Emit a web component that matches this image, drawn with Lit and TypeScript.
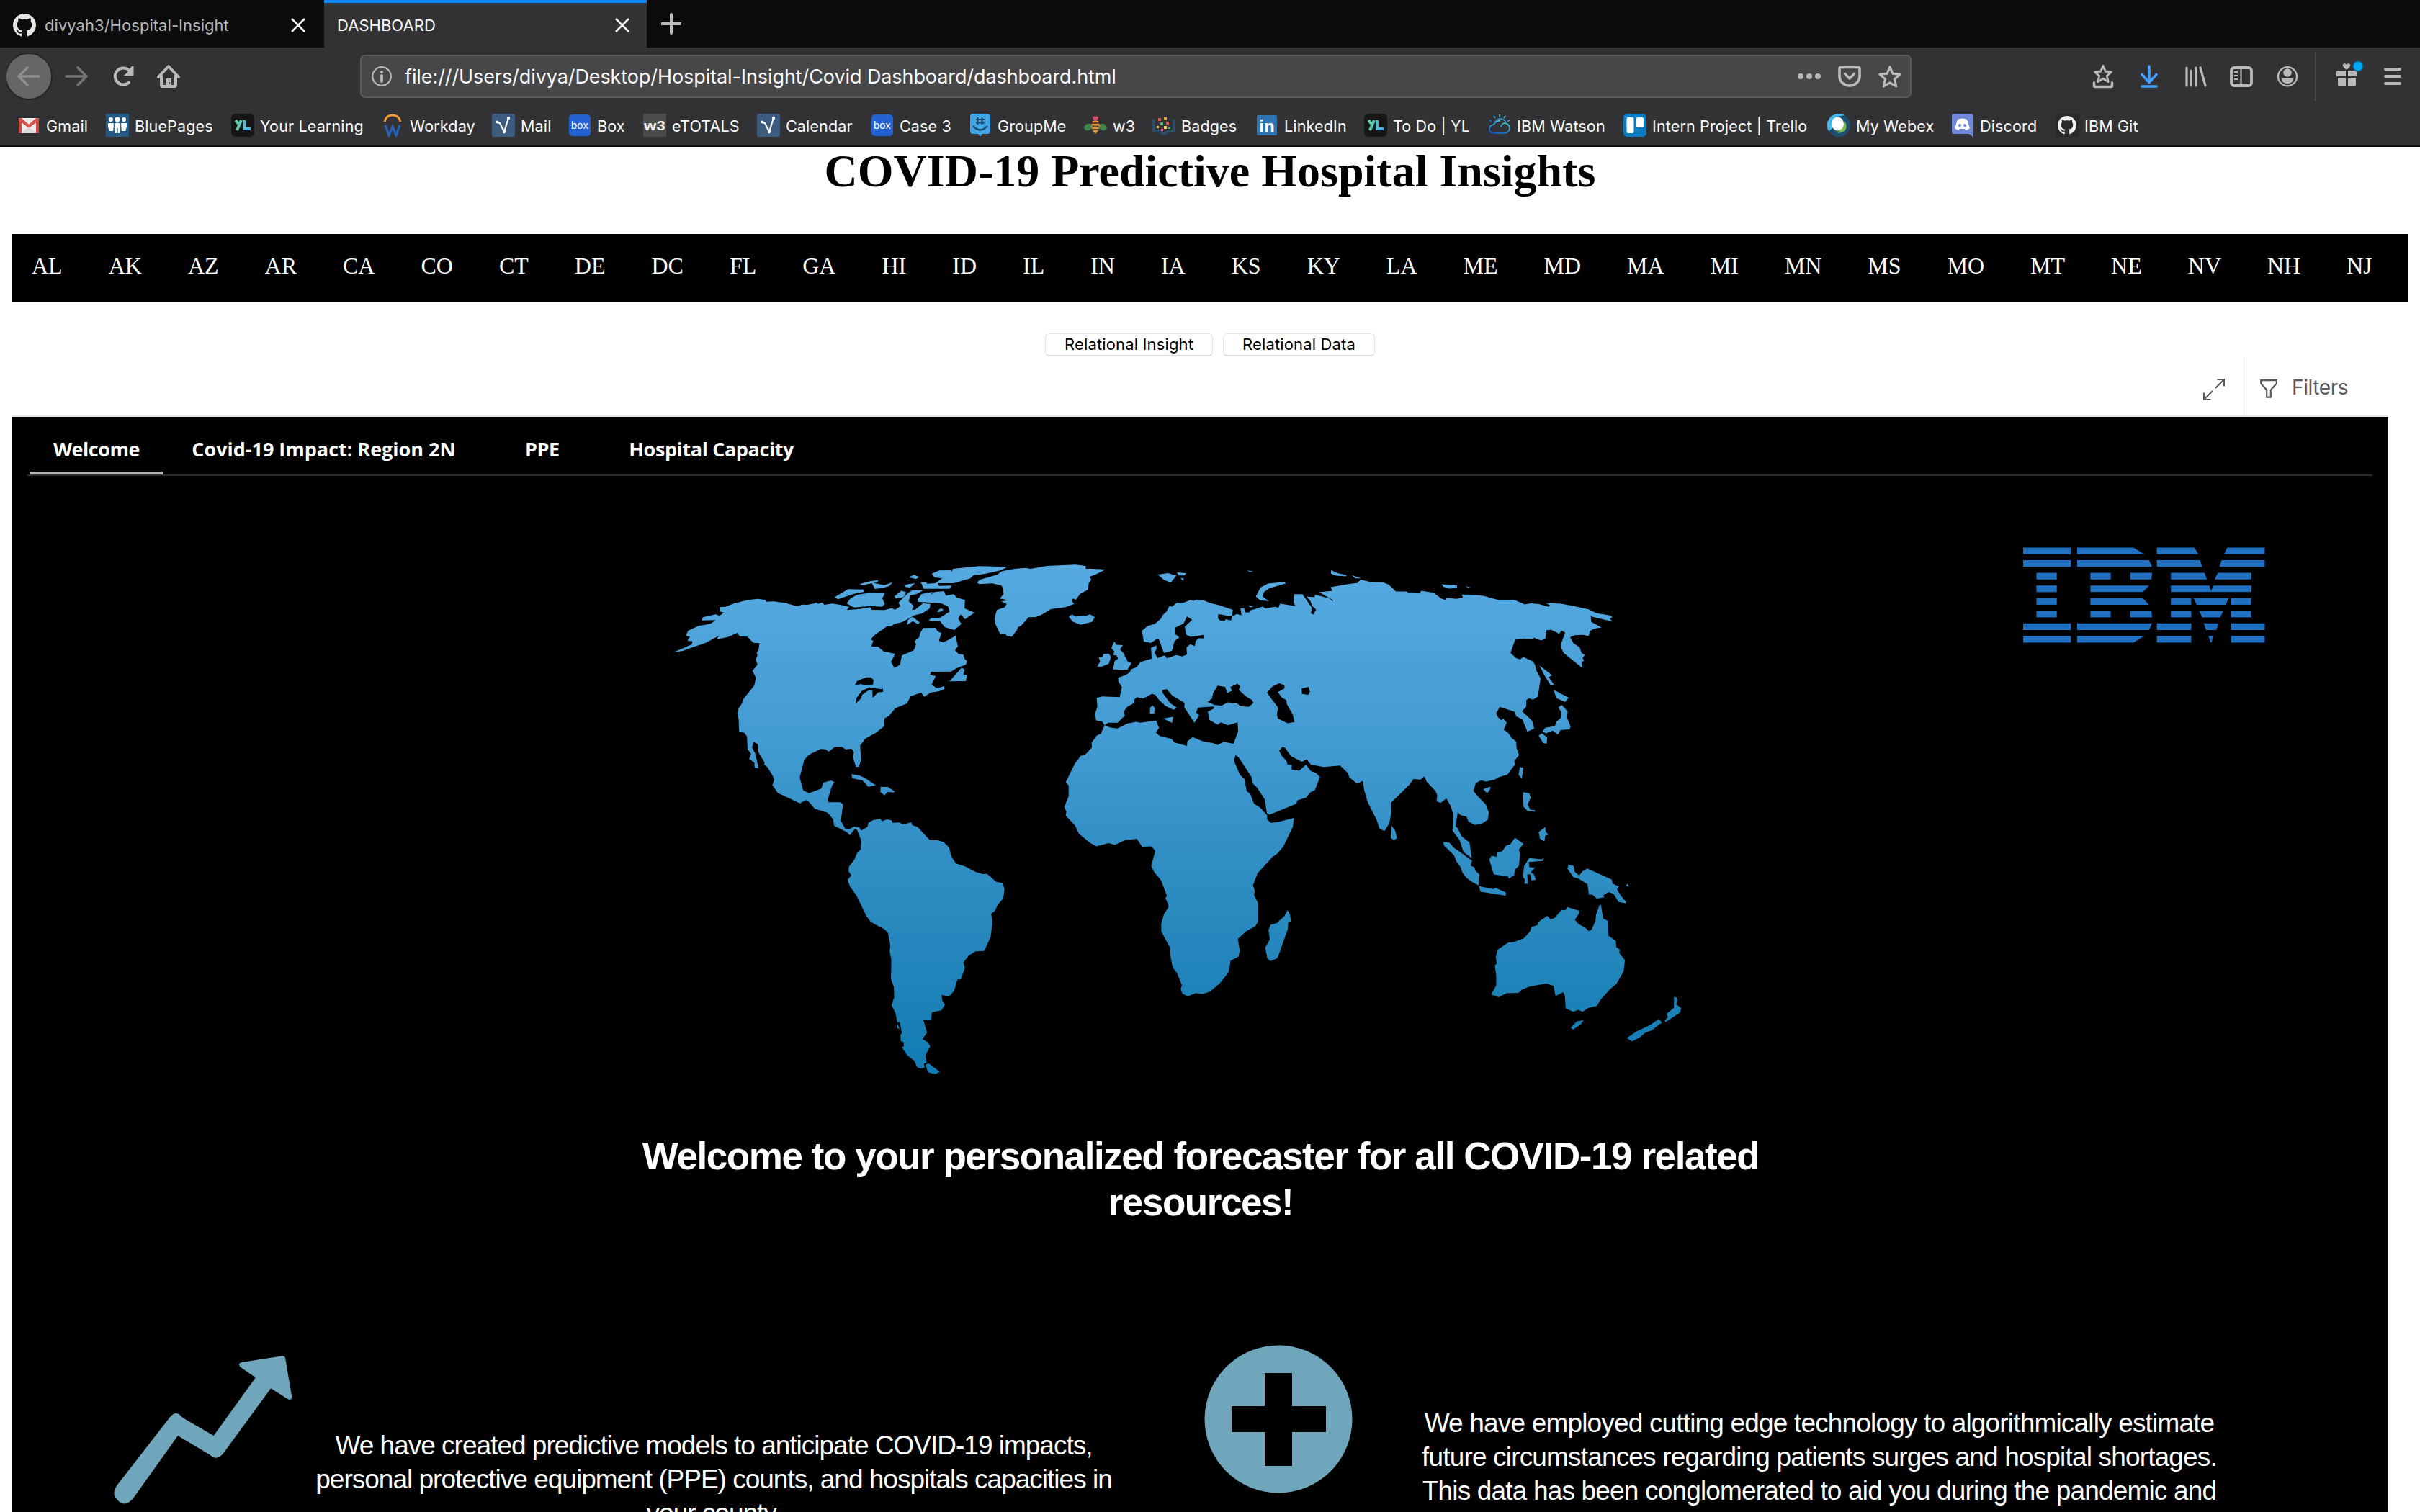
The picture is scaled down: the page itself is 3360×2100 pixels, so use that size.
import { LitElement, html, svg, css } from "lit";
import { customElement } from "lit/decorators.js";

const OCTOCAT =
  "M8 0C3.58 0 0 3.58 0 8c0 3.54 2.29 6.53 5.47 7.59.4.07.55-.17.55-.38 0-.19-.01-.82-.01-1.49-2.01.37-2.53-.49-2.69-.94-.09-.23-.48-.94-.82-1.13-.28-.15-.68-.52-.01-.53.63-.01 1.08.58 1.23.82.72 1.21 1.87.87 2.33.66.07-.52.28-.87.51-1.07-1.78-.2-3.64-.89-3.64-3.95 0-.87.31-1.59.82-2.15-.08-.2-.36-1.02.08-2.12 0 0 .67-.21 2.2.82.64-.18 1.32-.27 2-.27s1.36.09 2 .27c1.53-1.04 2.2-.82 2.2-.82.44 1.1.16 1.92.08 2.12.51.56.82 1.27.82 2.15 0 3.07-1.87 3.75-3.65 3.95.29.25.54.73.54 1.48 0 1.07-.01 1.93-.01 2.2 0 .21.15.46.55.38A8.01 8.01 0 0 0 16 8c0-4.42-3.58-8-8-8z";

const sans = "Liberation Sans, Arial, sans-serif";

/* Bookmark icons, each on a 32 x 32 canvas. */
const favicons: Record<string, unknown> = {
  gmail: svg`<rect x="2" y="6" width="28" height="21" rx="2" fill="#eeecec"/><path d="M2 27V8l4 3v16zM30 27V8l-4 3v16z" fill="#c94a3d"/><path d="M2 9Q2 5 6 6l10 9 10-9q4-1 4 3L16 20z" fill="#d8524a"/><path d="M6 27l10-9 10 9z" fill="#d9d8d8"/>`,
  blue: svg`<rect width="32" height="32" fill="#235a85"/><g fill="#fff"><circle cx="7" cy="8" r="3"/><circle cx="25" cy="8" r="3"/><circle cx="16" cy="8" r="3.4"/><path d="M3 13h8v5l-1 6H5l-2-6zM21 13h8v5l-2 6h-5l-1-6zM11 14q5-3 10 0v7l-2 6h-6l-2-6z"/></g><path d="M11.300 13v12M20.700 13v12M16 20v7" stroke="#235a85" stroke-width="1.200"/>`,
  yl: svg`<defs><linearGradient id="yl" x1="0" x2="1"><stop offset="0" stop-color="#5fd39a"/><stop offset="1" stop-color="#4aa9f5"/></linearGradient></defs><rect width="32" height="32" rx="6" fill="#161616"/><path d="M6 9l6 7M14 9L8 23M18 9v12h9" stroke="url(#yl)" stroke-width="4" fill="none"/>`,
  workday: svg`<path d="M5 11Q7 2 16 2t11 9" fill="none" stroke="#f09a37" stroke-width="3"/><path d="M6 16l5 14 5-12 5 12 5-14" fill="none" stroke="#2760b8" stroke-width="3.400"/>`,
  verse: svg`<rect width="32" height="32" rx="2" fill="#3b5b80"/><path d="M7 12l4 1 6 12 6-19" fill="none" stroke="#fff" stroke-width="2.200"/><circle cx="7" cy="11.500" r="2" fill="#fff"/><circle cx="23" cy="6" r="2.200" fill="#fff"/><circle cx="17" cy="25" r="2.200" fill="#fff"/>`,
  box: svg`<rect x="1" y="1" width="30" height="30" rx="5" fill="#2362d0"/><text x="16" y="21" text-anchor="middle" font-family=${sans} font-size="15" textLength="24" lengthAdjust="spacingAndGlyphs" fill="#fff">box</text>`,
  etotals: svg`<rect width="32" height="32" fill="#4c4c4c"/><text x="16" y="23" text-anchor="middle" font-family=${sans} font-weight="700" font-size="19" textLength="30" lengthAdjust="spacingAndGlyphs" fill="#eee">w3</text>`,
  groupme: svg`<path d="M6 0h20q4 0 4 4v20q0 4-4 4h-7l-3 4-3-4H6q-4 0-4-4V4q0-4 4-4z" fill="#3fa5e8"/><path d="M12.500 5v10M18.500 5v10M10 8h12M10 12.500h12" stroke="#1c4566" stroke-width="2"/><path d="M6 17q10 11 20 0" fill="none" stroke="#1c4566" stroke-width="2.400"/>`,
  bee: svg`<path d="M13 4l2 4M19 4l-2 4" stroke="#d94f68" stroke-width="3"/><circle cx="16" cy="7" r="3" fill="#d94f68"/><ellipse cx="6" cy="18.500" rx="6" ry="4.500" fill="#3f8749" transform="rotate(-20 6 18.500)"/><ellipse cx="26" cy="18.500" rx="6" ry="4.500" fill="#3f8749" transform="rotate(20 26 18.500)"/><path d="M12 10h8l2 7-3 8-3 3-3-3-3-8z" fill="#e6963a"/><path d="M11 13h10M11 17.500h10M11 22h10" stroke="#5a4326" stroke-width="1.800"/>`,
  badges: svg`<path d="M2 8v16l9 1 5 3 5-3 9-1V8" fill="none" stroke="#28506f" stroke-width="3.500"/><g><rect x="8" y="6" width="4" height="4" fill="#e0554b"/><rect x="16" y="5" width="4" height="4" fill="#f0a83f"/><rect x="11" y="12" width="4" height="4" fill="#49ae73"/><rect x="19" y="11" width="4" height="4" fill="#e0554b"/><rect x="6" y="17" width="3" height="3" fill="#ddc846"/><rect x="16" y="17" width="4" height="4" fill="#f0d04f"/><rect x="12" y="21" width="3" height="3" fill="#d9609a"/><rect x="22" y="18" width="3" height="3" fill="#66b46a"/></g>`,
  linkedin: svg`<rect x="2" y="2" width="28" height="28" rx="2" fill="#2f75b0"/><text x="16" y="25.500" text-anchor="middle" font-family=${sans} font-weight="700" font-size="24" fill="#fff">in</text>`,
  watson: svg`<defs><linearGradient id="wt" x1="0" y1="1" x2=".6" y2="0"><stop offset="0" stop-color="#1552d8"/><stop offset="1" stop-color="#3fd0d8"/></linearGradient></defs><g fill="none" stroke="url(#wt)" stroke-width="1.700"><path d="M7 27q-5-1-5-6t6-6q3-6 9-5M8 27h16q6-2 6-7t-6-7q-5 0-6 5"/><path d="M9 13q2-6 8-6 5 0 8 5M16 1l.01 4M8 3l2 3M24 3l-2 3M2 9l3 1.500M30 9l-3 1.500"/></g>`,
  trello: svg`<rect width="32" height="32" rx="5" fill="#0a7bc2"/><rect x="4.500" y="5" width="10" height="22" rx="2" fill="#fff"/><rect x="18" y="5" width="10" height="14" rx="2" fill="#fff"/>`,
  webex: svg`<circle cx="16" cy="16" r="16" fill="#1d4f72"/><path d="M16 0a16 16 0 0 0-14 24Q10 20 14 4l10-2A16 16 0 0 0 16 0z" fill="#45b8ea"/><path d="M10 24q10 4 14-14 6 10-2 15-6 4-12-1z" fill="#7bbf53"/><ellipse cx="14.500" cy="14" rx="8.500" ry="9.500" fill="#fff"/>`,
  discord: svg`<path d="M4 0h24q2 0 2 2v30l-5-4H4q-3 0-3-3V3q0-3 3-3z" fill="#7289da"/><path d="M9 8q7-3 13 0l4 12q-3 3-6 3l-1-2h-7l-1 2q-3 0-6-3z" fill="#fff"/><circle cx="12" cy="16" r="2" fill="#7289da"/><circle cx="19" cy="16" r="2" fill="#7289da"/>`,
  github: svg`<rect width="32" height="32" rx="3" fill="#2a2a2c"/><g transform="translate(3 3) scale(1.620)"><path d=${OCTOCAT} fill="#f0f0f0"/></g>`,
};

const bookmarks: [string, string][] = [
  ["gmail", "Gmail"],
  ["blue", "BluePages"],
  ["yl", "Your Learning"],
  ["workday", "Workday"],
  ["verse", "Mail"],
  ["box", "Box"],
  ["etotals", "eTOTALS"],
  ["verse", "Calendar"],
  ["box", "Case 3"],
  ["groupme", "GroupMe"],
  ["bee", "w3"],
  ["badges", "Badges"],
  ["linkedin", "LinkedIn"],
  ["yl", "To Do | YL"],
  ["watson", "IBM Watson"],
  ["trello", "Intern Project | Trello"],
  ["webex", "My Webex"],
  ["discord", "Discord"],
  ["github", "IBM Git"],
];

const states =
  "AL AK AZ AR CA CO CT DE DC FL GA HI ID IL IN IA KS KY LA ME MD MA MI MN MS MO MT NE NV NH NJ".split(" ");

/* Land outlines, one set per part of the world; each set has its own scale. */
const NORTH_AMERICA =
  "M78 438L110 420L135 405L138 392L122 390L130 372L117 370L124 348L158 327L172 325L195 318L210 304L166 305L170 292L210 280L222 286L235 272L222 268L222 250L240 248L270 233L310 220L340 215L365 220L368 227L390 226L425 232L462 246L480 239L495 240L518 234L522 230L528 236L540 230L548 240L572 235L600 241L625 249L618 262L660 257L690 250L695 261L735 262L757 254L768 260L785 245L778 232L790 215L805 195L820 180L855 180L835 195L815 200L810 225L826 245L820 262L830 260L855 233L878 237L875 255L852 276L830 283L790 312L765 320L755 329L742 330L705 365L692 383L700 391L694 413L715 415L732 434L768 444L755 478L766 503L783 490L789 451L826 430L833 405L828 392L843 375L845 360L855 337L893 336L900 350L912 358L904 390L917 397L940 382L956 368L963 413L954 430L965 444L980 448L984 466L992 475L988 489L958 505L942 518L880 519L877 530L894 538L881 572L898 588L920 579L922 590L905 600L878 606L858 623L849 606L816 621L805 651L768 671L749 703L735 713L732 748L708 773L675 798L659 827L662 887L655 915L646 915L636 873L640 855L633 840L614 842L600 831L582 831L561 852L552 842L536 841L498 866L485 887L471 960L482 1013L500 1025L538 1006L545 981L568 972L580 979L572 993L558 1052L561 1063L598 1063L606 1072L599 1140L613 1173L625 1175L640 1164L655 1168L662 1180L662 1220L650 1178L643 1174L627 1200L618 1187L578 1160L575 1133L558 1106L518 1090L498 1059L490 1054L472 1067L403 1024L386 991L392 970L387 952L370 915L361 907L362 897L343 855L341 822L328 810L323 835L333 860L343 921L331 919L330 898L314 882L320 860L309 842L307 788L299 773L283 768L281 715L277 695L281 671L290 655L296 633L330 576L335 543L324 515L340 489L334 468L340 450L337 440L343 430L346 400L327 398L308 373L285 371L277 357L248 374L212 384L221 368L178 399L125 423L108 432Z" +
  "M937 559L975 502L984 510L980 530L992 532L988 558Z" +
  "M632 946L655 950L672 960L708 992L684 998L667 972L635 963Z" +
  "M723 998L745 999L766 1017L764 1022L744 1020L735 1034L722 1020Z" +
  "M617 234L630 212L650 198L675 193L705 190L736 193L728 213L736 237L727 248L690 245L640 251Z" +
  "M580 208L622 175L668 176L672 186L640 194L590 217Z" +
  "M657 154L690 142L716 137L712 146L665 158Z" +
  "M695 148L735 158L760 146L750 162L728 170L705 174Z" +
  "M766 205L788 181L803 188L795 208L770 214Z" +
  "M796 157L830 150L815 168L800 166Z" +
  "M810 125L826 115L843 124L833 133Z" +
  "M848 147L865 146L867 152L900 149L905 161L943 160L937 173L857 173Z" +
  "M893 150L945 100L948 90L985 85L1030 79L1118 82L1095 97L1045 112L1012 116L1002 130L950 150Z" +
  "M882 110L905 97L940 96L944 106L930 118L912 130L890 125Z" +
  "M837 220L850 195L885 186L868 215L875 200L892 186L920 184L926 202L950 196L960 210L985 220L984 255L1015 273L985 300L972 280L964 297L974 320L952 345L922 333L907 307L873 306L880 294L907 295L938 268L932 247L910 233L870 230L840 228Z" +
  "M898 268L908 256L918 258L914 267L902 270Z" +
  "M804 325L808 302L822 290L844 313L840 322L823 308Z";

const GREENLAND =
  "M1022 147L1032 135L1085 115L1100 100L1140 90L1172 86L1190 90L1215 84L1240 78L1290 75L1330 73L1360 78L1361 90L1375 89L1422 93L1390 115L1372 123L1378 135L1370 150L1368 176L1343 195L1330 220L1322 214L1316 222L1325 236L1298 250L1252 258L1222 283L1205 291L1183 292L1160 327L1150 333L1147 345L1131 373L1115 370L1111 359L1095 363L1080 320L1077 297L1084 262L1109 250L1115 237L1098 225L1121 221L1094 214L1105 195L1104 172L1098 159L1070 151L1030 154Z" +
  "M1308 290L1318 280L1328 289L1362 286L1374 280L1389 292L1380 311L1345 323L1320 310Z";

const GREAT_LAKES =
  "M642 575L650 557L678 542L692 542L701 553L699 572L672 575L662 570Z" +
  "M645 652L648 628L665 598L688 584L726 592L729 587L731 602L715 605L698 628L697 595L685 596L665 615L662 630Z";

const SOUTH_AMERICA =
  "M662 281L682 265L685 248L700 237L722 232L727 242L742 234L757 238L760 248L780 247L793 255L818 246L821 258L838 266L876 321L900 321L918 328L936 352L942 387L957 418L985 430L1018 453L1040 462L1054 461L1083 495L1101 499L1108 525L1104 563L1087 590L1078 615L1067 627L1070 670L1065 724L1045 782L1018 784L997 802L980 830L985 853L972 901L962 901L951 949L935 973L912 965L915 992L923 1005L912 1030L882 1038L880 1069L867 1071L855 1067L867 1122L853 1150L870 1163L877 1180L862 1217L866 1248L857 1252L860 1268L847 1273L836 1266L827 1240L806 1217L788 1183L795 1180L794 1162L785 1158L785 1130L789 1125L782 1078L775 1080L769 1042L757 1008L765 975L764 932L755 900L756 820L751 782L753 760L746 708L735 692L693 662L679 638L648 552L627 512L620 485L632 468L623 450L624 432L642 400L649 376L662 358L660 348L662 315L650 278L655 265Z" +
  "M862 1256L872 1250L907 1286L892 1295L870 1288Z" +
  "M775 1085L782 1107L775 1105Z";

const EUROPE_AFRICA =
  "M248 513L270 508L344 510L353 476L338 457L338 444L370 434L385 426L392 415L415 408L430 391L478 379L474 343L497 334L497 348L488 358L502 377L530 368L541 378L580 367L605 372L624 365L622 342L637 330L657 336L660 320L672 310L696 310L695 298L640 305L620 297L615 270L646 247L624 236L610 260L575 274L575 296L592 307L572 320L562 352L528 360L508 315L500 311L474 326L444 321L437 284L460 268L490 261L515 244L524 230L537 221L552 199L562 203L582 188L607 190L640 179L650 183L665 178L695 181L720 190L760 198L815 213L813 232L800 234L755 228L753 242L763 250L782 251L785 245L808 249L812 236L832 227L851 232L847 208L862 207L866 222L885 222L888 215L940 202L950 208L992 203L1005 206L1012 192L1075 200L1068 185L1070 160L1105 160L1122 180L1145 207L1140 225L1150 229L1162 212L1146 200L1138 183L1122 168L1155 170L1158 162L1200 170L1215 172L1230 184L1232 180L1200 165L1175 153L1230 148L1222 136L1300 125L1333 122L1348 110L1380 117L1380 780L1357 795L1333 805L1300 783L1295 769L1262 743L1195 748L1140 740L1123 722L1103 730L1058 712L1033 683L1022 679L1008 692L1020 712L1036 724L1043 739L1060 740L1060 757L1092 761L1120 740L1140 762L1162 768L1178 782L1157 826L1138 834L1120 852L1083 862L1080 873L968 910L957 905L948 858L918 820L896 802L893 782L840 716L825 706L830 695L820 727L845 775L863 788L873 830L888 840L903 873L930 887L958 912L958 926L973 938L1005 935L1070 921L1065 952L1025 1019L1000 1043L980 1054L918 1110L899 1150L906 1168L904 1185L920 1210L920 1275L908 1290L870 1307L836 1333L844 1373L839 1393L806 1407L797 1447L762 1483L720 1512L690 1520L660 1518L627 1528L605 1519L598 1503L603 1490L582 1448L565 1431L556 1395L553 1362L517 1307L517 1280L528 1249L547 1225L546 1215L535 1195L540 1185L516 1133L488 1106L475 1085L492 1034L477 1018L437 1019L416 993L368 996L324 1013L297 1007L246 1018L220 1006L174 975L158 947L119 913L122 900L113 884L131 848L131 811L119 800L158 735L182 710L200 706L228 682L227 665L248 641L266 634L281 605L305 614L335 617L375 600L412 594L430 597L495 590L508 615L494 630L510 642L562 653L570 664L624 676L626 660L648 646L697 663L730 666L752 673L777 662L818 669L837 627L835 596L795 606L765 596L752 604L718 588L711 560L738 548L735 542L670 546L662 562L675 572L655 597L613 545L614 530L562 504L540 483L521 486L522 495L553 530L583 547L568 553L535 540L508 520L492 502L478 499L440 515L416 510L405 518L405 530L375 543L360 560L365 573L335 597L297 597L281 605L270 592L247 590L239 572L251 542Z" +
  "M470 546L482 539L490 547L487 567L470 566Z" +
  "M524 583L567 577L562 598Z" +
  "M321 321L330 332L357 333L345 348L360 361L378 390L393 394L376 417L316 416L323 387L337 380L331 369L316 366L322 355L309 343Z" +
  "M257 374L272 374L276 363L298 362L308 373L298 397L268 407L251 406L262 389Z" +
  "M502 93L545 88L580 97L557 120L530 112Z" +
  "M582 86L620 88L615 96L590 96Z" +
  "M597 105L610 106L609 115Z" +
  "M911 168L930 137L962 124L1032 118L1035 124L965 140L944 153L940 168L965 184L928 180Z" +
  "M880 197L903 200L888 205Z" +
  "M876 79L902 83L885 85Z" +
  "M1225 78L1250 88L1290 95L1285 99L1245 97L1224 90Z" +
  "M1310 95L1350 106L1325 106Z" +
  "M1043 1235L1053 1249L1057 1273L1046 1276L1044 1300L1005 1390L1000 1399L972 1408L959 1400L950 1362L969 1335L964 1302L972 1285L998 1279L1030 1255Z";

const INLAND_SEAS =
  "M709 527L728 515L733 497L752 471L783 475L792 496L812 488L805 476L835 464L846 474L840 486L870 508L895 520L901 530L882 543L845 541L835 532L795 528L768 539L738 537L720 529Z" +
  "M957 495L980 474L1008 463L1030 469L1030 481L1002 493L1020 512L1038 520L1040 534L1065 570L1072 595L1043 599L1003 583L999 570L1003 545Z" +
  "M1102 481L1130 475L1136 491L1130 502L1103 499Z";

const ASIA_PACIFIC =
  "M241 101L270 105L318 107L335 113L361 134L400 134L405 137L449 140L452 132L498 138L525 155L542 160L545 153L580 156L604 153L600 143L640 144L678 147L730 159L790 159L828 173L850 170L880 172L915 180L920 176L905 169L960 171L1000 177L1060 188L1088 199L1140 207L1146 212L1137 216L1147 225L1110 218L1068 209L1070 226L1107 243L1082 246L1065 253L1060 269L1040 265L1010 266L993 272L1005 290L1028 303L1034 319L1046 326L1038 335L1044 343L1036 347L1038 366L970 320L960 303L961 290L975 258L962 252L953 262L925 250L907 251L903 277L887 282L862 274L858 277L823 276L793 280L777 320L798 336L812 339L823 332L855 344L865 354L870 372L886 397L876 452L858 461L844 457L834 463L834 482L819 496L855 525L863 548L838 558L820 521L797 511L793 498L738 483L725 502L730 513L744 524L750 518L763 531L752 552L767 560L781 577L797 588L799 608L808 629L790 647L793 657L765 688L735 695L720 703L688 709L670 705L651 713L642 737L660 755L687 778L698 802L695 824L675 835L648 840L624 830L617 815L595 810L585 802L578 845L585 850L600 875L628 893L636 940L606 922L592 886L566 857L570 830L567 802L558 780L544 760L523 773L508 768L511 752L506 739L473 710L464 693L451 703L425 701L410 718L362 758L342 773L344 805L337 835L320 858L302 852L291 825L258 770L246 735L241 707Z" +
  "M345 843L358 857L365 880L353 887L342 878Z" +
  "M678 732L704 724L703 732L692 745Z" +
  "M811 665L823 667L818 700L806 688Z" +
  "M822 741L845 744L850 758L839 778L848 794L867 796L865 800L838 797L824 785Z" +
  "M879 862L903 846L905 860L913 869L902 874L900 890L884 882Z" +
  "M700 945L708 933L726 937L728 924L748 919L760 903L777 898L793 879L824 897L807 914L812 927L807 964L793 975L790 992L770 1003L768 996L716 990Z" +
  "M533 891L556 894L570 908L637 948L632 963L645 968L651 980L664 990L661 1023L637 1012L617 1000L603 985L596 968L580 950L572 932L535 902Z" +
  "M662 1025L715 1034L722 1030L760 1044L759 1054L668 1042Z" +
  "M822 998L826 965L845 940L890 944L898 940L893 949L843 952L845 968L865 969L850 984L862 990L869 1006L853 1008L849 990L838 990L839 1018L827 1018L829 1005Z" +
  "M983 972L988 960L1006 964L1010 982L1026 993L1037 981L1055 972L1144 1005L1147 1017L1170 1027L1163 1035L1178 1055L1197 1073L1194 1077L1169 1073L1150 1048L1133 1043L1113 1053L1117 1059L1090 1063L1073 1051L1061 1051L1056 1019L1022 1002L1005 998Z" +
  "M1195 1024L1202 1017L1206 1027Z" +
  "M707 1353L725 1325L725 1297L720 1264L727 1260L723 1240L731 1217L768 1196L790 1194L825 1183L847 1163L853 1149L875 1143L877 1134L910 1115L921 1125L936 1122L962 1097L975 1098L984 1089L1027 1100L1025 1108L1010 1127L1024 1140L1048 1151L1060 1161L1070 1158L1085 1131L1087 1112L1100 1082L1105 1082L1113 1123L1130 1130L1132 1175L1159 1191L1161 1210L1173 1217L1172 1228L1192 1249L1187 1283L1162 1320L1136 1339L1104 1368L1090 1388L1060 1393L1038 1405L1022 1399L1005 1405L977 1395L974 1358L968 1346L940 1358L933 1327L906 1320L845 1329L817 1339L806 1348L762 1349L734 1361Z" +
  "M995 1453L1018 1434L1042 1430L1032 1443L1004 1459Z" +
  "M1370 1360L1378 1361L1383 1368L1378 1383L1396 1394L1393 1407L1340 1436L1336 1432L1348 1421L1343 1411L1370 1393Z" +
  "M1199 1484L1238 1463L1282 1446L1315 1427L1326 1438L1288 1462L1265 1469L1245 1483L1217 1495Z" +
  "M882 358L928 387L915 393L935 416L922 417L898 385Z" +
  "M933 431L988 455L975 468L943 456Z" +
  "M950 485L962 477L984 496L982 516L995 543L991 551L958 553L949 567L930 555L905 563L893 557L903 546L938 541L943 528L961 515L961 498Z" +
  "M879 570L890 563L910 575L908 594L896 593Z" +
  "M527 112L582 115L583 123L555 125L533 120Z" +
  "M613 118L630 121L625 123Z";

/* Striped logo: per row, quads given as top-left, top-right, bottom-right, bottom-left x. */
const STRIPES: number[][][] = [
  [[0, 61, 61, 0], [69, 141, 155, 69], [171, 219, 224, 171], [261, 309, 309, 257]],
  [[0, 61, 61, 0], [69, 161, 165, 69], [171, 226, 229, 171], [254, 309, 309, 251]],
  [[17, 43, 43, 17], [86, 112, 112, 86], [137, 165, 164, 137], [189, 232, 235, 189], [249, 292, 292, 245]],
  [[17, 43, 43, 17], [86, 161, 153, 86], [189, 238, 241, 189], [243, 292, 292, 240]],
  [[17, 43, 43, 17], [86, 153, 161, 86], [189, 215, 215, 189], [218, 263, 259, 222], [266, 292, 292, 266]],
  [[17, 43, 43, 17], [86, 112, 112, 86], [137, 164, 165, 137], [189, 215, 215, 189], [225, 256, 252, 229], [266, 292, 292, 266]],
  [[0, 61, 61, 0], [69, 165, 161, 69], [171, 215, 215, 171], [231, 250, 247, 234], [266, 309, 309, 266]],
  [[0, 61, 61, 0], [69, 155, 141, 69], [171, 215, 215, 171], [237, 243, 241, 240], [266, 309, 309, 266]],
];

@customElement("browser-chrome")
export class BrowserChrome extends LitElement {
  static styles = css`
    :host {
      display: block;
      font-family: Inter, Roboto, sans-serif;
      color: #f9f9fa;
      background: #323234;
      height: 202px;
      border-bottom: 2px solid #0c0c0d;
    }
    svg {
      display: block;
      flex: none;
    }
    .tabs {
      display: flex;
      height: 66px;
      background: #0c0c0d;
    }
    .tab {
      display: flex;
      align-items: center;
      box-sizing: border-box;
      height: 66px;
      width: 450px;
      padding: 4px 26px 0 18px;
      font-size: 22px;
      letter-spacing: 0.04px;
      color: #b8b8ba;
    }
    .tab span {
      flex: 1;
      padding-left: 12px;
    }
    .tab.active {
      width: 448px;
      padding: 0 24px 0 6px;
      border-top: 4px solid #0a84ff;
      background: #323234;
      color: #f9f9fa;
    }
    .plus {
      margin: 18px 0 0 20px;
    }
    .bar {
      display: flex;
      align-items: center;
      height: 80px;
      padding-left: 8px;
    }
    .nav {
      display: flex;
      align-items: center;
      width: 492px;
    }
    .url {
      display: flex;
      align-items: center;
      box-sizing: border-box;
      width: 2154px;
      height: 60px;
      padding: 0 12px 0 14px;
      background: #474749;
      border: 2px solid #5b5b5d;
      border-radius: 7px;
      font-size: 27px;
      letter-spacing: -0.09px;
    }
    .url span {
      flex: 1;
      padding-left: 18px;
      white-space: nowrap;
    }
    .url svg + svg {
      margin-left: 24px;
    }
    .tools {
      margin-left: 246px;
    }
    .marks {
      display: grid;
      grid-template-columns: 123px 174px 208px 154px 106px 104px 158px 158px 136px 160px 95px 143px 151px 172px 188px 283px 172px 145px 140px;
      padding: 12px 0 0 24px;
    }
    .mark {
      display: flex;
      align-items: center;
      gap: 8px;
      height: 32px;
      font-size: 21.5px;
      letter-spacing: 0.15px;
      white-space: nowrap;
    }
    .mark span {
      padding-top: 1px;
    }
  `;

  render() {
    const g = "#b9b9bb";
    return html`
      <div class="tabs">
        <div class="tab">
          <svg width="32" height="32" viewBox="0 0 16 16"><path d=${OCTOCAT} fill="#e6e6e8" /></svg>
          <span>divyah3/Hospital-Insight</span>
          <svg width="20" height="20" viewBox="0 0 20 20"><path d="M1 1L19 19M19 1L1 19" stroke="#f9f9fa" stroke-width="2.600" /></svg>
        </div>
        <div class="tab active">
          <span>DASHBOARD</span>
          <svg width="20" height="20" viewBox="0 0 20 20"><path d="M1 1L19 19M19 1L1 19" stroke="#f9f9fa" stroke-width="2.600" /></svg>
        </div>
        <svg class="plus" width="28" height="30" viewBox="0 0 28 30"><path d="M14 2v26M1 15h26" stroke="#b9b9bb" stroke-width="4" stroke-linecap="round" /></svg>
      </div>
      <div class="bar">
        <div class="nav">
          <svg width="250" height="68" viewBox="0 0 250 68">
            <circle cx="32" cy="34" r="32" fill="#666668" stroke="#262628" stroke-width="2" />
            <g fill="none" stroke-linecap="round" stroke-linejoin="round" stroke-width="3.600">
              <path d="M46 34H18M30 22L18 34l12 12" stroke="#8f8f91" />
              <path d="M84 34h28M100 22l12 12-12 12" stroke="#757577" />
            </g>
            <path d="M171 25.500A11.500 11.500 0 1 0 171 42.500" fill="none" stroke=${g} stroke-width="4" stroke-linecap="round" />
            <path d="M177.500 20v11.500q0 1.500-1.500 1.500h-12l5-5 6-8z" fill=${g} />
            <path d="M212 35l14-15 14 15M216 33v13q0 2 2 2h16q2 0 2-2V33" fill="none" stroke=${g} stroke-width="4" stroke-linecap="round" stroke-linejoin="round" />
            <path d="M222 49V37h8v12z" fill=${g} /><circle cx="227.500" cy="43" r="1" fill="#323234" />
          </svg>
        </div>
        <div class="url">
          <svg width="28" height="28" viewBox="0 0 28 28"><circle cx="14" cy="14" r="12.800" fill="none" stroke=${g} stroke-width="2.200" /><circle cx="14" cy="8" r="2.200" fill=${g} /><path d="M14 13v8" stroke=${g} stroke-width="3.800" stroke-linecap="round" /></svg>
          <span>file:///Users/divya/Desktop/Hospital-Insight/Covid Dashboard/dashboard.html</span>
          <svg width="32" height="32" viewBox="0 0 32 32"><g fill=${g}><circle cx="4" cy="16" r="4" /><circle cx="16" cy="16" r="4" /><circle cx="28" cy="16" r="4" /></g></svg>
          <svg width="32" height="32" viewBox="0 0 32 32"><path d="M4 3.500h24q2 0 2 2V16a14 13 0 0 1-28 0V5.500q0-2 2-2z" fill="none" stroke=${g} stroke-width="3.600" /><path d="M9.500 12.500l6.500 6.500 6.500-6.500" fill="none" stroke=${g} stroke-width="3.800" stroke-linecap="round" stroke-linejoin="round" /></svg>
          <svg width="32" height="32" viewBox="0 0 32 32"><path d="M16 3l4 9.300 10 .9-7.500 6.800 2.200 10L16 24.800 7.300 30l2.200-10L2 13.200l10-.9z" fill="none" stroke=${g} stroke-width="3.200" stroke-linejoin="round" /></svg>
        </div>
        <svg class="tools" width="440" height="68" viewBox="2900 0 440 68">
          <path d="M2920 19.500l3.300 7.600 8 .8-6 5.600 1.800 8-7.100-4.200-7.100 4.200 1.800-8-6-5.600 8-.8z" fill="none" stroke=${g} stroke-width="3" stroke-linejoin="round" />
          <path d="M2907.500 43v4q0 1.500 2 1.500h21q2 0 2-1.500v-4" fill="none" stroke=${g} stroke-width="3.600" stroke-linecap="round" />
          <path d="M2984 20v21M2974 31.500l10 11 10-11M2974 48h20" fill="none" stroke="#45a1ff" stroke-width="3.600" stroke-linecap="round" stroke-linejoin="round" />
          <path d="M3036 22v25M3042 26v21M3049 22v25M3055 22l7 25" fill="none" stroke=${g} stroke-width="3.200" stroke-linecap="round" />
          <rect x="3098" y="22" width="28" height="25" rx="4" fill="none" stroke=${g} stroke-width="3.800" />
          <path d="M3111.500 22v25M3102 28h5M3102 33h5M3102 38h5" stroke=${g} stroke-width="2.200" />
          <circle cx="3176" cy="34.300" r="13" fill="none" stroke=${g} stroke-width="2.400" />
          <circle cx="3176" cy="29" r="5.800" fill=${g} /><path d="M3167.500 36h17q0 8-8.500 8t-8.500-8z" fill=${g} />
          <path d="M3215 0v68" stroke="#5b5b5d" stroke-width="1.500" />
          <path d="M3245 26h12v8h-13v-7zM3260 26h12v8h-12zM3246 36.500h11V48h-9q-2 0-2-2zM3260 36.500h11V46q0 2-2 2h-9z" fill=${g} />
          <path d="M3258 25q-8-6-4-8.500 3-1 4 1.500 1-2.500 4-1.500 4 2.500-4 8.500z" fill=${g} />
          <circle cx="3274" cy="20" r="7" fill="#00a7f5" stroke="#1c5a78" stroke-width="1.500" />
          <path d="M3312 24h20M3312 34h20M3312 44h20" stroke=${g} stroke-width="3.800" stroke-linecap="round" />
        </svg>
      </div>
      <div class="marks">
        ${bookmarks.map(
          ([icon, label]) => html`<div class="mark">
            <svg width="32" height="32" viewBox="0 0 32 32">${favicons[icon]}</svg>
            <span>${label}</span>
          </div>`,
        )}
      </div>
    `;
  }
}

@customElement("world-map")
export class WorldMap extends LitElement {
  static styles = css`
    :host {
      display: block;
    }
    svg {
      display: block;
    }
  `;

  render() {
    return html`<svg width="1404" height="720" viewBox="934 780 1404 720">
      <defs>
        <linearGradient id="sea" gradientUnits="userSpaceOnUse" x1="0" y1="780" x2="0" y2="1495">
          <stop offset="0" stop-color="#56aae1" />
          <stop offset="0.35" stop-color="#429bd2" />
          <stop offset="0.55" stop-color="#3290c6" />
          <stop offset="0.8" stop-color="#2184ba" />
          <stop offset="1" stop-color="#107bb3" />
        </linearGradient>
        <mask id="land" maskUnits="userSpaceOnUse" x="934" y="780" width="1404" height="720">
          <g fill="#fff">
            <g transform="translate(900 760) scale(.446429 .333333)">
              <path d=${NORTH_AMERICA} /><path d=${GREENLAND} /><path d=${GREAT_LAKES} fill="#000" />
            </g>
            <g transform="translate(900 1060) scale(.446429 .333333)"><path d=${SOUTH_AMERICA} /></g>
            <g transform="translate(1440 760) scale(.333333 .408163)">
              <path d=${EUROPE_AFRICA} /><path d=${INLAND_SEAS} fill="#000" />
            </g>
            <g transform="translate(1800 760) scale(.382653 .459184)"><path d=${ASIA_PACIFIC} /></g>
          </g>
        </mask>
      </defs>
      <rect x="934" y="780" width="1404" height="720" fill="url(#sea)" mask="url(#land)" />
    </svg>`;
  }
}

@customElement("app-root")
export class AppRoot extends LitElement {
  static styles = css`
    :host {
      display: block;
      width: 3360px;
      height: 2100px;
      overflow: hidden;
      background: #fff;
    }
    svg {
      display: block;
      flex: none;
    }
    .title {
      margin: 0;
      font: 700 64px/68px "Liberation Serif", "Times New Roman", serif;
      text-align: center;
      color: #000;
    }
    .states {
      display: flex;
      gap: 8px;
      box-sizing: border-box;
      margin: 53px 16px 0;
      height: 94px;
      padding-top: 26px;
      background: #000;
      color: #fff;
      font: 32px/36px "Liberation Serif", "Times New Roman", serif;
    }
    .state {
      padding: 0 28px;
    }
    .buttons {
      display: flex;
      justify-content: center;
      gap: 14px;
      margin-top: 44px;
    }
    .button {
      box-sizing: border-box;
      height: 32px;
      padding: 0 26px;
      border: 1px solid #e4e4e4;
      border-bottom: 2px solid #dadada;
      border-radius: 6px;
      background: #fff;
      font: 22px/29px Inter, Roboto, sans-serif;
      letter-spacing: 0.14px;
      color: #000;
    }
    .toolbar {
      display: flex;
      justify-content: flex-end;
      height: 80px;
      margin: 2px 44px 0 16px;
    }
    .expand {
      margin: 28px 25px 0 0;
    }
    .filters {
      display: flex;
      width: 200px;
      border-left: 1.5px solid #ececec;
      font: 28px/36px Inter, Roboto, sans-serif;
      letter-spacing: -0.4px;
      color: #5a5a5a;
    }
    .filters svg {
      margin: 30px 20px 0 22px;
    }
    .filters span {
      padding-top: 23px;
    }
    .panel {
      width: 3300px;
      height: 1523px;
      margin-left: 16px;
      overflow: hidden;
      border-top: 2px solid #e6e9e9;
      box-sizing: border-box;
      background: #000;
      color: #fff;
    }
    .tabs {
      display: flex;
      gap: 8.500px;
      height: 80px;
      margin: 0 22px;
      padding-left: 4px;
      border-bottom: 2px solid #2a2a2a;
      font: 700 27px/36px "Open Sans", "Noto Sans", sans-serif;
      letter-spacing: -0.4px;
    }
    .tab {
      box-sizing: border-box;
      min-width: 160px;
      padding: 27px 32px 0;
      border-bottom: 4px solid transparent;
      text-align: center;
      white-space: nowrap;
    }
    .tab.active {
      border-bottom-color: #b5b5b5;
      letter-spacing: -0.5px;
    }
    .tab.region {
      letter-spacing: -0.02px;
    }
    .hero {
      display: flex;
      align-items: flex-start;
      height: 913px;
      padding-left: 918px;
      box-sizing: border-box;
    }
    .map {
      margin-top: 119px;
    }
    .logo {
      margin: 99px 0 0 471px;
    }
    .welcome {
      width: 1800px;
      margin: 0 0 0 751px;
      height: 128px;
      font: 700 53px/64px "Liberation Sans", Arial, sans-serif;
      letter-spacing: -1.440px;
      text-align: center;
    }
    .features {
      display: flex;
      align-items: flex-start;
      margin-top: 166px;
      padding-left: 142px;
      font: 37px/47px "Liberation Sans", Arial, sans-serif;
      text-align: center;
      white-space: nowrap;
    }
    .trend {
      margin-top: 15px;
    }
    .copy {
      width: 1120px;
    }
    .first {
      margin: 116px 121px 0 25px;
      letter-spacing: -1px;
    }
    .second {
      margin: 85px 0 0 88px;
      letter-spacing: -0.830px;
    }
  `;

  render() {
    return html`
      <browser-chrome></browser-chrome>
      <h1 class="title">COVID-19 Predictive Hospital Insights</h1>
      <div class="states">${states.map((s) => html`<span class="state">${s}</span>`)}</div>
      <div class="buttons">
        <div class="button">Relational Insight</div>
        <div class="button">Relational Data</div>
      </div>
      <div class="toolbar">
        <svg class="expand" width="32" height="32" viewBox="0 0 32 32">
          <path d="M18 14L29.500 2.500M20.500 2H30v9.500M14 18L2.500 29.500M2 20.500V30h9.500" fill="none" stroke="#5a5a5a" stroke-width="2" />
        </svg>
        <div class="filters">
          <svg width="24" height="26" viewBox="0 0 24 26"><path d="M1.200 1.200h21.600v4.500l-8 9v9.900H9.200v-9.900l-8-9z" fill="none" stroke="#5a5a5a" stroke-width="2.200" /></svg>
          <span>Filters</span>
        </div>
      </div>
      <div class="panel">
        <div class="tabs">
          <div class="tab active">Welcome</div>
          <div class="tab region">Covid-19 Impact: Region 2N</div>
          <div class="tab">PPE</div>
          <div class="tab">Hospital Capacity</div>
        </div>
        <div class="hero">
          <world-map class="map"></world-map>
          <svg class="logo" width="336" height="134" viewBox="0 0 309.500 134" preserveAspectRatio="none" fill="#1f70c1">
            ${STRIPES.map((row, r) => {
              const y = 0.5 + r * 17.55;
              return row.map(
                ([a, b, c, d]) => svg`<path d=${`M${a} ${y}H${b}L${c} ${y + 9.2}H${d}Z`} />`,
              );
            })}
          </svg>
        </div>
        <div class="welcome">
          Welcome to your personalized forecaster for all COVID-19 related<br />resources!
        </div>
        <div class="features">
          <svg class="trend" width="248" height="208" viewBox="149 960 234.300 582.400" preserveAspectRatio="none">
            <path d="M150 1505Q148 1488 153 1465L221 1205Q230 1165 239 1200L280 1271L335 1045L315 1004Q311 990 317 985L370 961Q373 960 374 970L382.500 1118Q382 1137 377 1128L355 1087L293 1338Q284 1372 275 1345L233 1271L176 1508Q162 1564 150 1505Z" fill="#6fa6bb" />
          </svg>
          <div class="copy first">
            We have created predictive models to anticipate COVID-19 impacts,<br />personal protective
            equipment (PPE) counts, and hospitals capacities in<br />your county.
          </div>
          <svg width="206" height="206" viewBox="0 0 206 206">
            <circle cx="103" cy="103" r="102.500" fill="#6fa6bb" />
            <path d="M84 39h38v46h47v36h-47v47H84v-47H38V85h46z" fill="#000" />
          </svg>
          <div class="copy second">
            We have employed cutting edge technology to algorithmically estimate<br />future circumstances
            regarding patients surges and hospital shortages.<br />This data has been conglomerated to
            aid you during the pandemic and
          </div>
        </div>
      </div>
    `;
  }
}
